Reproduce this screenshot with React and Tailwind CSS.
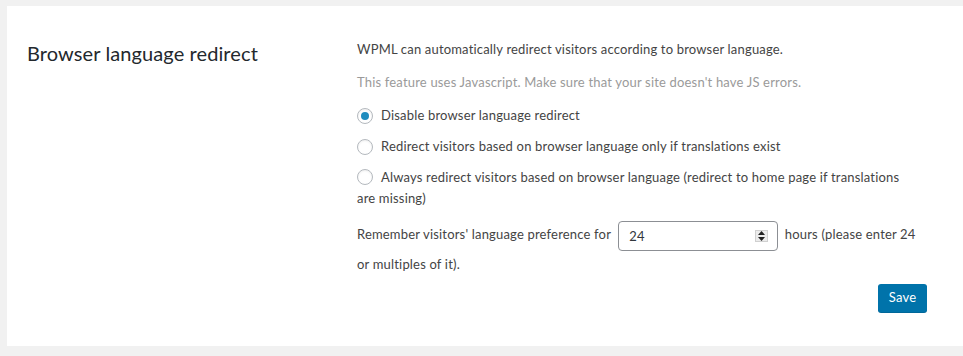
const FONT = { fontFamily: 'Lato, "Liberation Sans", sans-serif', letterSpacing: '0.18px' }

function Radio({ checked, children }) {
  return (
    <label className="flex items-start gap-2 text-[13px] leading-[21px] text-[#444]">
      <span className="mt-[2.5px] flex h-4 w-4 shrink-0 items-center justify-center rounded-full border border-[#b4b9be] bg-white shadow-[inset_0_1px_2px_rgba(0,0,0,0.07)]">
        {checked && <span className="h-2 w-2 rounded-full bg-[#1e8cbe]" />}
      </span>
      <span>{children}</span>
    </label>
  )
}

export default function App() {
  return (
    <div className="h-[356px] w-[963px] overflow-hidden bg-[#f1f1f1] pl-[7px] pt-[6px]" style={FONT}>
      <div className="flex h-[340px] w-[956px] bg-white">
        {/* left column */}
        <div className="w-[350px] shrink-0 pl-[20px]">
          <h2 className="mt-[33px] text-[20px] leading-7 tracking-[0.1px] text-[#23282d]">Browser language redirect</h2>
        </div>

        {/* right column */}
        <div className="w-[570px] text-[13px] text-[#444]">
          <p className="mt-[33px] leading-5">
            WPML can automatically redirect visitors according to browser language.
          </p>
          <p className="mt-[13px] leading-5 text-[#9a9a9a]">
            This feature uses Javascript. Make sure that your site doesn't have JS errors.
          </p>

          <div className="mt-[13px] flex flex-col gap-[10px] pr-[10px]">
            <Radio checked>Disable browser language redirect</Radio>
            <Radio>Redirect visitors based on browser language only if translations exist</Radio>
            <label className="block text-[13px] leading-[21px] text-[#444]">
              <span className="mr-2 inline-block h-4 w-4 rounded-full border border-[#b4b9be] align-[-3px] shadow-[inset_0_1px_2px_rgba(0,0,0,0.07)]" />
              Always redirect visitors based on browser language (redirect to home page if translations are missing)
            </label>
          </div>

          <p className="mt-[12px] pr-[10px] leading-[26px]">
            Remember visitors' language preference for{' '}
            <span className="relative ml-[4px] mr-[3px] inline-block align-middle">
              <input
                type="text"
                defaultValue="24"
                className="h-[30px] w-[160px] rounded-[4px] border border-[#8c8f94] bg-white pl-[10px] text-[13px] text-[#32373c] outline-none"
                style={FONT}
              />
              <span className="absolute right-[10px] top-[9px] flex h-[12px] w-[13px] flex-col items-center justify-center gap-[2px] border border-[#d0d0d0] bg-[#ececec]">
                <svg width="7" height="4" viewBox="0 0 7 4"><path d="M3.5 0L7 4H0z" fill="#222" /></svg>
                <svg width="7" height="4" viewBox="0 0 7 4"><path d="M0 0h7L3.5 4z" fill="#222" /></svg>
              </span>
            </span>{' '}
            hours (please enter 24 or multiples of it).
          </p>

          <div className="mt-[7px] flex justify-end">
            <button className="h-[28px] w-[49px] rounded-[3px] bg-[#0073aa] text-[13px] text-white shadow-[0_1px_0_#006799]">
              Save
            </button>
          </div>
        </div>
      </div>
    </div>
  )
}
